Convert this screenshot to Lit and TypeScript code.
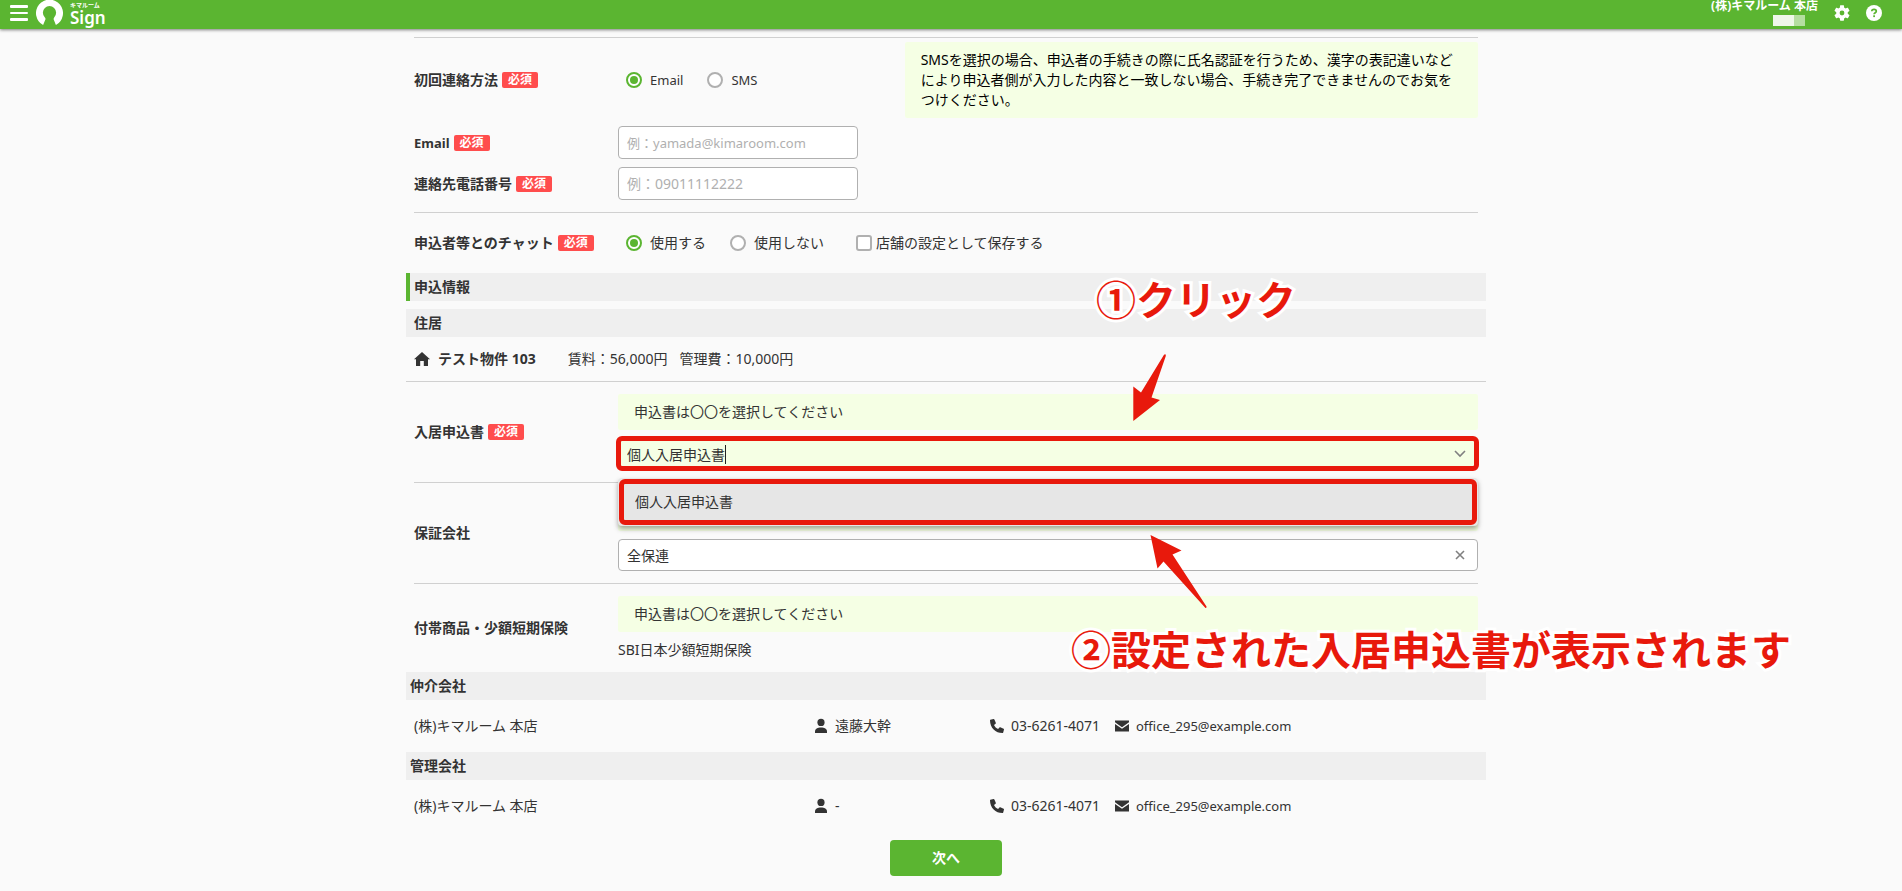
import { LitElement, html, css, svg, nothing } from "lit";
import { customElement, property, state } from "lit/decorators.js";

const shared = css`
  * {
    box-sizing: border-box;
  }
  input,
  button {
    font: inherit;
    color: inherit;
    margin: 0;
  }
  a {
    color: inherit;
    text-decoration: none;
  }
  svg {
    display: block;
    flex: none;
  }
`;

@customElement("site-header")
class SiteHeader extends LitElement {
  static styles = [
    shared,
    css`
      :host {
        display: block;
        position: relative;
        z-index: 2;
        background: #5bb531;
        color: #fff;
        box-shadow: 0 1px 3px rgba(0, 0, 0, 0.5);
      }
      .bar {
        display: flex;
        align-items: flex-start;
        justify-content: space-between;
        height: 29px;
        padding: 0 20px 0 10px;
      }
      .left,
      .right {
        display: flex;
        align-items: flex-start;
      }
      .icon-button {
        display: block;
        padding: 0;
        border: 0;
        background: none;
        cursor: pointer;
      }
      .menu {
        padding-top: 4px;
      }
      .logo {
        display: flex;
        gap: 7px;
        margin-left: 8px;
      }
      .wordmark {
        display: flex;
        flex-direction: column;
        padding-top: 1px;
        font-weight: 600;
      }
      .kana {
        font-size: 6px;
        line-height: 8px;
      }
      .sign {
        font-size: 17px;
        line-height: 17px;
      }
      .account {
        display: flex;
        flex-direction: column;
        align-items: flex-end;
        gap: 3px;
        margin-right: 16px;
        font-size: 12px;
        line-height: 12px;
        font-weight: 700;
      }
      .masked {
        display: flex;
        height: 11px;
        margin-right: 13px;
      }
      .masked-a {
        width: 21px;
        background: #eff7ea;
      }
      .masked-b {
        width: 11px;
        background: #b5dea1;
      }
      .tools {
        display: flex;
        gap: 16px;
        padding-top: 5px;
      }
    `,
  ];

  render() {
    return html`<header class="bar">
      <div class="left">
        <button class="icon-button menu" type="button" aria-label="メニュー">
          <svg width="18" height="18" viewBox="0 0 18 18" fill="#fff">
            <rect y="1" width="18" height="3" rx="1" />
            <rect y="8" width="18" height="2" rx="1" />
            <rect y="14" width="18" height="3" rx="1" />
          </svg>
        </button>
        <a class="logo" href="#">
          <svg width="27" height="26" viewBox="0 0 27 26">
            <path
              d="M7.1 25 A13.5 13.5 0 1 1 19.9 25 L17.6 19.2 Q17.6 18 18.3 17.2 A6.6 6.6 0 1 0 8.7 17.2 Q9.6 18 9.5 19.2 Z"
              fill="#fff"
            />
          </svg>
          <span class="wordmark">
            <span class="kana">キマルーム</span>
            <span class="sign">Sign</span>
          </span>
        </a>
      </div>
      <div class="right">
        <div class="account">
          <span>(株)キマルーム 本店</span>
          <span class="masked"><i class="masked-a"></i><i class="masked-b"></i></span>
        </div>
        <div class="tools">
          <button class="icon-button" type="button" aria-label="設定">
            <svg width="16" height="16" viewBox="2 2 20 20">
              <path
                fill="#fff"
                d="M19.14 12.94c.04-.3.06-.61.06-.94 0-.32-.02-.64-.07-.94l2.03-1.58c.18-.14.23-.41.12-.61l-1.92-3.32c-.12-.22-.37-.29-.59-.22l-2.39.96c-.5-.38-1.03-.7-1.62-.94l-.36-2.54c-.04-.24-.24-.41-.48-.41h-3.84c-.24 0-.43.17-.47.41l-.36 2.54c-.59.24-1.13.57-1.62.94l-2.39-.96c-.22-.08-.47 0-.59.22L2.74 8.87c-.12.21-.08.47.12.61l2.03 1.58c-.05.3-.09.63-.09.94s.02.64.07.94l-2.03 1.58c-.18.14-.23.41-.12.61l1.92 3.32c.12.22.37.29.59.22l2.39-.96c.5.38 1.03.7 1.62.94l.36 2.54c.05.24.24.41.48.41h3.84c.24 0 .44-.17.47-.41l.36-2.54c.59-.24 1.13-.56 1.62-.94l2.39.96c.22.08.47 0 .59-.22l1.92-3.32c.12-.22.07-.47-.12-.61l-2.01-1.58zM12 15a3 3 0 1 1 0-6 3 3 0 0 1 0 6z"
              />
            </svg>
          </button>
          <button class="icon-button" type="button" aria-label="ヘルプ">
            <svg width="16" height="16" viewBox="0 0 16 16">
              <circle cx="8" cy="8" r="8" fill="#fff" />
              <path
                d="M5.8 6.3 C5.8 3.6 10.3 3.7 10.3 6.2 C10.3 7.7 8.1 7.7 8.1 9.2"
                fill="none"
                stroke="#5bb531"
                stroke-width="1.7"
              />
              <rect x="7.2" y="10.3" width="1.8" height="1.8" fill="#5bb531" />
            </svg>
          </button>
        </div>
      </div>
    </header>`;
  }
}

@customElement("field-label")
class FieldLabel extends LitElement {
  @property() text = "";
  @property({ type: Boolean }) required = false;

  static styles = [
    shared,
    css`
      :host {
        display: flex;
        align-items: center;
        gap: 4px;
        font-weight: 700;
      }
      .badge {
        width: 36px;
        border-radius: 2px;
        background: #ff4d4d;
        color: #fff;
        font-size: 12px;
        line-height: 16px;
        text-align: center;
      }
    `,
  ];

  render() {
    return html`<span>${this.text}</span>${this.required
        ? html`<span class="badge">必須</span>`
        : nothing}`;
  }
}

const icons = {
  home: svg`<path d="M8 1 L16 8.3 H14 V15 H9.8 V10 H6.2 V15 H2 V8.3 H0 Z"/>`,
  person: svg`<circle cx="8" cy="4.4" r="3.6"/><path d="M2 15 V13.2 C2 10.8 4.6 9.4 8 9.4 S14 10.8 14 13.2 V15 Z"/>`,
  phone: svg`<path d="M1.3 1.8 L4.6 1 Q5.2 .9 5.4 1.4 L6.8 4.8 Q7 5.3 6.6 5.7 L5 7 C5.9 8.8 7.2 10.2 9.1 11.1 L10.4 9.5 Q10.8 9.1 11.3 9.3 L14.6 10.7 Q15.1 11 15 11.5 L14.2 14.5 Q14 15 13.5 15 C6.600 15 1 9.600 1 2.400 Q1 1.900 1.300 1.800 Z"/>`,
  mail: svg`<path d="M1 2.500 H15 V4.300 L8 9.200 L1 4.300 Z M1 5.900 L8 10.800 L15 5.900 V13.500 H1 Z"/>`,
};

const icon = (name: keyof typeof icons) =>
  html`<svg width="16" height="16" viewBox="0 0 16 16" fill="#333" aria-hidden="true">
    ${icons[name]}
  </svg>`;

const companies = [
  { role: "仲介会社", name: "(株)キマルーム 本店", person: "遠藤大幹" },
  { role: "管理会社", name: "(株)キマルーム 本店", person: "-" },
];

@customElement("app-root")
class AppRoot extends LitElement {
  @state() private form = "個人入居申込書";
  @state() private guarantor = "全保連";

  static styles = [
    shared,
    css`
      :host {
        display: block;
        min-height: 100vh;
        background: #fafafa;
        color: #333;
        font-family: "Noto Sans", "Noto Sans CJK JP", sans-serif;
        font-size: 14px;
        line-height: 20px;
      }
      .scroll {
        padding: 8px 10px 15px 0;
        overflow: hidden;
      }
      .page {
        position: relative;
        max-width: 1080px;
        margin: 0 auto;
      }
      .latin {
        font-size: 13px;
      }
      .section {
        padding: 0 8px;
      }
      .row {
        display: grid;
        grid-template-columns: 204px minmax(0, 1fr);
        align-items: center;
        border-top: 1px solid #d0d0d0;
      }
      .row.plain {
        border-top: 0;
        padding-bottom: 8px;
      }
      .row.last-plain {
        padding-bottom: 12px;
      }
      .row.contact {
        padding: 4px 0 8px;
      }
      .row.chat {
        min-height: 61px;
      }
      .row.block {
        padding: 12px 0;
      }
      .row.first {
        border-top: 0;
      }
      .split {
        display: grid;
        grid-template-columns: 1fr 2fr;
        align-items: center;
      }
      .options {
        display: flex;
        align-items: center;
        gap: 24px;
        padding-left: 8px;
      }
      .option {
        display: flex;
        align-items: center;
        gap: 8px;
      }
      .option.check {
        gap: 4px;
        margin-left: 8px;
      }
      .radio,
      .checkbox {
        appearance: none;
        display: grid;
        place-items: center;
        width: 16px;
        height: 16px;
        border: 2px solid #b0b0b0;
        background: #fff;
      }
      .radio {
        border-radius: 50%;
      }
      .checkbox {
        border-radius: 3px;
      }
      .radio:checked {
        border-color: #5bb531;
      }
      .radio:checked::before {
        content: "";
        width: 8px;
        height: 8px;
        border-radius: 50%;
        background: #5bb531;
      }
      .note {
        min-height: 36px;
        padding: 8px 16px;
        border-radius: 2px;
        background: #f5ffe4;
      }
      .note.strong {
        color: #000;
      }
      .stack {
        display: flex;
        flex-direction: column;
        gap: 8px;
      }
      .input {
        display: block;
        width: 100%;
        height: 32px;
        padding: 0 8px;
        border: 1px solid #b0b0b0;
        border-radius: 4px;
        background: #fff;
        outline: 0;
      }
      .input.short {
        width: 240px;
        height: 33px;
      }
      .input::placeholder {
        color: #b0b0b0;
        opacity: 1;
      }
      .input.active {
        background: #f5ffe4;
        caret-color: transparent;
      }
      .combo {
        position: relative;
      }
      .combo-button {
        position: absolute;
        top: 8px;
        right: 10px;
        padding: 0;
        border: 0;
        background: none;
      }
      .caret {
        position: absolute;
        top: 7px;
        width: 1px;
        height: 19px;
        background: #222;
      }
      .marked::after {
        content: "";
        position: absolute;
        inset: -2px -1px -1px -2px;
        border: 5px solid #e8190c;
        border-radius: 6px;
        pointer-events: none;
      }
      .popup {
        position: absolute;
        z-index: 1;
        top: 40px;
        left: 0;
        right: 0;
        margin: 0;
        padding: 0;
        list-style: none;
        border-radius: 4px;
        background: #e6e6e6;
        box-shadow: 0 3px 5px rgba(0, 0, 0, 0.35);
      }
      .popup.marked::after {
        inset: 1px;
      }
      .popup-item {
        padding: 14px 17px;
      }
      .band {
        margin: 0;
        padding: 4px;
        background: #efefef;
        font-size: 14px;
        line-height: 20px;
        font-weight: 700;
      }
      .band.title {
        margin-bottom: 8px;
        border-left: 4px solid #5bb531;
      }
      .band.indent {
        padding-left: 8px;
      }
      .property {
        display: flex;
        align-items: center;
        height: 45px;
        padding: 0 8px;
        border-bottom: 1px solid #d0d0d0;
      }
      .property-name {
        margin: 0 32px 0 8px;
        font-weight: 700;
      }
      .property-fee {
        margin-right: 12px;
      }
      .company {
        display: grid;
        grid-template-columns: 399fr 176fr 125fr 364fr;
        padding: 16px 8px;
      }
      .with-icon {
        display: flex;
        align-items: center;
        gap: 6px;
        white-space: nowrap;
      }
      .actions {
        display: flex;
        justify-content: center;
        padding-top: 8px;
      }
      .next {
        width: 112px;
        height: 36px;
        border: 0;
        border-radius: 4px;
        background: #5bb531;
        color: #fff;
        font-weight: 700;
      }
      .callout {
        position: absolute;
        z-index: 3;
        margin: 0;
        font-family: "Noto Sans CJK JP", sans-serif;
        font-size: 40px;
        line-height: 60px;
        font-weight: 700;
        color: #e8190c;
        white-space: nowrap;
        -webkit-text-stroke: 6px #fff;
        paint-order: stroke fill;
      }
      .callout.one {
        left: 690px;
        top: 231px;
      }
      .callout.two {
        left: 665px;
        top: 581px;
      }
      .arrow {
        position: absolute;
        z-index: 3;
      }
      .arrow.one {
        left: 727px;
        top: 317px;
      }
      .arrow.two {
        left: 744px;
        top: 497px;
      }
    `,
  ];

  private onForm(e: Event) {
    this.form = (e.target as HTMLInputElement).value;
  }

  render() {
    return html`
      <site-header lang="ja"></site-header>
      <main class="scroll" lang="ja">
        <div class="page">
          <div class="section">
            <div class="row contact">
              <field-label text="初回連絡方法" required></field-label>
              <div class="split">
                <div class="options latin" role="radiogroup" aria-label="初回連絡方法">
                  <label class="option"><input class="radio" type="radio" name="contact" checked />Email</label>
                  <label class="option"><input class="radio" type="radio" name="contact" />SMS</label>
                </div>
                <div class="note strong">
                  SMSを選択の場合、申込者の手続きの際に氏名認証を行うため、漢字の表記違いなどにより申込者側が入力した内容と一致しない場合、手続き完了できませんのでお気をつけください。
                </div>
              </div>
            </div>
            <div class="row plain">
              <label class="latin" for="email"><field-label text="Email" required></field-label></label>
              <input class="input short latin" id="email" type="email" placeholder="例：yamada@kimaroom.com" />
            </div>
            <div class="row plain last-plain">
              <label for="tel"><field-label text="連絡先電話番号" required></field-label></label>
              <input class="input short" id="tel" type="tel" placeholder="例：09011112222" />
            </div>
            <div class="row chat">
              <field-label text="申込者等とのチャット" required></field-label>
              <div class="options" role="radiogroup" aria-label="申込者等とのチャット">
                <label class="option"><input class="radio" type="radio" name="chat" checked />使用する</label>
                <label class="option"><input class="radio" type="radio" name="chat" />使用しない</label>
                <label class="option check"><input class="checkbox" type="checkbox" />店舗の設定として保存する</label>
              </div>
            </div>
          </div>

          <h2 class="band title">申込情報</h2>
          <h3 class="band indent">住居</h3>
          <div class="property">
            ${icon("home")}
            <span class="property-name">テスト物件 103</span>
            <span class="property-fee">賃料：56,000円</span>
            <span>管理費：10,000円</span>
          </div>

          <div class="section">
            <div class="row block first">
              <label for="form"><field-label text="入居申込書" required></field-label></label>
              <div class="stack">
                <div class="note">申込書は〇〇を選択してください</div>
                <div class="combo marked">
                  <input
                    class="input active"
                    id="form"
                    role="combobox"
                    aria-expanded="true"
                    aria-controls="form-list"
                    .value=${this.form}
                    @input=${this.onForm}
                  />
                  <span class="caret" style="left: calc(9px + ${this.form.length}em)"></span>
                  <button class="combo-button" type="button" aria-label="開く">
                    <svg width="16" height="16" viewBox="0 0 16 16">
                      <path d="M3 5 L8 10 L13 5" fill="none" stroke="#808080" stroke-width="1.6" />
                    </svg>
                  </button>
                  <ul class="popup marked" id="form-list" role="listbox">
                    <li class="popup-item" role="option" aria-selected="true">個人入居申込書</li>
                  </ul>
                </div>
              </div>
            </div>
            <div class="row block">
              <label for="guarantor"><field-label text="保証会社"></field-label></label>
              <div class="stack">
                <div class="note"></div>
                <div class="combo">
                  <input class="input" id="guarantor" .value=${this.guarantor} />
                  <button
                    class="combo-button"
                    type="button"
                    aria-label="クリア"
                    @click=${() => (this.guarantor = "")}
                  >
                    <svg width="16" height="16" viewBox="0 0 16 16">
                      <path d="M4 4 L12 12 M12 4 L4 12" stroke="#808080" stroke-width="1.6" />
                    </svg>
                  </button>
                </div>
              </div>
            </div>
            <div class="row block">
              <field-label text="付帯商品・少額短期保険"></field-label>
              <div class="stack">
                <div class="note">申込書は〇〇を選択してください</div>
                <div>SBI日本少額短期保険</div>
              </div>
            </div>
          </div>

          ${companies.map(
            (c) => html`
              <h3 class="band">${c.role}</h3>
              <div class="company">
                <span>${c.name}</span>
                <span class="with-icon">${icon("person")}${c.person}</span>
                <a class="with-icon" href="tel:03-6261-4071">${icon("phone")}03-6261-4071</a>
                <a class="with-icon latin" href="mailto:office_295@example.com">${icon("mail")}office_295@example.com</a>
              </div>
            `,
          )}
          <div class="actions"><button class="next" type="button">次へ</button></div>

          <p class="callout one">①クリック</p>
          <svg class="arrow one" width="34" height="68" viewBox="0 0 34 68" fill="#e8190c">
            <path d="M.3 67 V32.500 L8 38.500 L31 .8 Q33 -.5 32.800 2 L18.500 43.500 L27 46 Z" />
          </svg>
          <p class="callout two">②設定された入居申込書が表示されます</p>
          <svg class="arrow two" width="58" height="76" viewBox="0 0 58 76" fill="#e8190c">
            <path d="M.5 1 L31.500 16.500 L22.500 20.500 L56.500 72.500 Q56.500 75 55 73.500 L13.500 27.500 L7.500 34.500 Z" />
          </svg>
        </div>
      </main>
    `;
  }
}
